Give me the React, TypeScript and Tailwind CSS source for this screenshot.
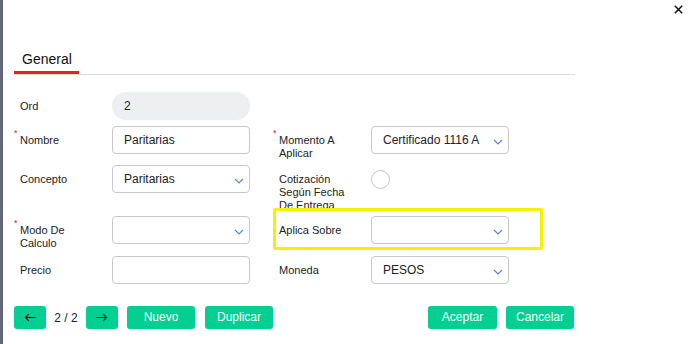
import React from "react";

const Chevron = () => (
  <svg width="10" height="6" viewBox="0 0 10 6" className="absolute right-[5px] top-1/2 -translate-y-[1px]">
    <path d="M1 1 L5 5 L9 1" fill="none" stroke="#5b86d6" strokeWidth="1.2" />
  </svg>
);

const Label = ({ text, req }: { text: React.ReactNode; req?: boolean }) => (
  <div className="relative w-[98px] shrink-0 pl-[6px] pt-[8px] text-[11px] leading-[13px] text-[#222]">
    {req && <span className="absolute left-0 top-[3px] text-[9px] leading-[9px] text-[#e02020]">*</span>}
    {text}
  </div>
);

const Input = ({ value, select }: { value?: string; select?: boolean }) => (
  <div className="relative w-[138px] h-[28px] shrink-0 rounded-[4px] border border-[#c9c9c9] bg-white pl-[11px] text-[12px] leading-[26px] text-[#222]">
    {value}
    {select && <Chevron />}
  </div>
);

const Btn = ({ children, w }: { children: React.ReactNode; w: string }) => (
  <div className={`${w} h-[23px] rounded-[3px] bg-[#02cf91] text-white text-[12px] leading-[23px] flex items-center justify-center`}>
    {children}
  </div>
);

export default function App() {
  return (
    <div className="w-[690px] h-[344px] bg-white flex font-['Liberation_Sans',Arial,sans-serif] overflow-hidden">
      <div className="w-[3px] shrink-0 bg-[#636779]" />
      <div className="relative flex-1 pl-[11px]">
        <svg width="9" height="9" viewBox="0 0 9 9" className="absolute top-[5px] right-[7px]">
          <path d="M0.8 0.8 L8.2 8.2 M8.2 0.8 L0.8 8.2" stroke="#111" strokeWidth="1.5" />
        </svg>

        <div className="w-[561px] pt-[51px] border-b border-[#dadada]">
          <div className="w-[65px] pl-[8px] pb-[4px] border-b-[3px] border-[#ea1f1f] text-[14px] leading-[16px] text-[#111]">
            General
          </div>
        </div>

        <div className="flex h-[28px] mt-[17px]">
          <Label text="Ord" />
          <div className="w-[138px] h-[28px] rounded-full bg-[#eeeff0] pl-[12px] text-[12px] leading-[28px] text-[#222]">2</div>
        </div>

        <div className="flex h-[28px] mt-[6px]">
          <Label text="Nombre" req />
          <Input value="Paritarias" />
          <div className="w-[23px] shrink-0" />
          <Label text={<>Momento A<br />Aplicar</>} req />
          <Input value="Certificado 1116 A" select />
        </div>

        <div className="flex h-[28px] mt-[11px]">
          <Label text="Concepto" />
          <Input value="Paritarias" select />
          <div className="w-[23px] shrink-0" />
          <Label text={<>Cotización<br />Según Fecha<br />De Entrega</>} />
          <div className="pt-[5px]">
            <div className="w-[19px] h-[19px] rounded-full border border-[#c6c6c6] bg-white" />
          </div>
        </div>

        <div className="flex h-[28px] mt-[23px]">
          <Label text={<>Modo De<br />Calculo</>} req />
          <Input select />
          <div className="w-[23px] shrink-0" />
          <div className="relative flex">
            <div className="absolute -top-[8px] left-0 w-[270px] h-[42px] border-[3px] border-[#f4f100] rounded-[2px] pointer-events-none" />
            <Label text="Aplica Sobre" />
            <Input select />
          </div>
        </div>

        <div className="flex h-[28px] mt-[12px]">
          <Label text="Precio" />
          <Input />
          <div className="w-[23px] shrink-0" />
          <Label text="Moneda" />
          <Input value="PESOS" select />
        </div>

        <div className="flex justify-between w-[560px] mt-[22px]">
          <div className="flex items-center">
            <Btn w="w-[32px]">
              <svg width="12" height="9" viewBox="0 0 12 9">
                <path d="M11.5 4.5 H1.5 M4.8 1.2 L1.5 4.5 L4.8 7.8" fill="none" stroke="#111" strokeWidth="1.2" />
              </svg>
            </Btn>
            <div className="w-[40px] text-center text-[12px] text-[#222]">2 / 2</div>
            <Btn w="w-[32px]">
              <svg width="12" height="9" viewBox="0 0 12 9">
                <path d="M0.5 4.5 H10.5 M7.2 1.2 L10.5 4.5 L7.2 7.8" fill="none" stroke="#111" strokeWidth="1.2" />
              </svg>
            </Btn>
            <div className="w-[9px]" />
            <Btn w="w-[68px]">Nuevo</Btn>
            <div className="w-[10px]" />
            <Btn w="w-[68px]">Duplicar</Btn>
          </div>
          <div className="flex items-center gap-[9px]">
            <Btn w="w-[69px]">Aceptar</Btn>
            <Btn w="w-[68px]">Cancelar</Btn>
          </div>
        </div>
      </div>
    </div>
  );
}
